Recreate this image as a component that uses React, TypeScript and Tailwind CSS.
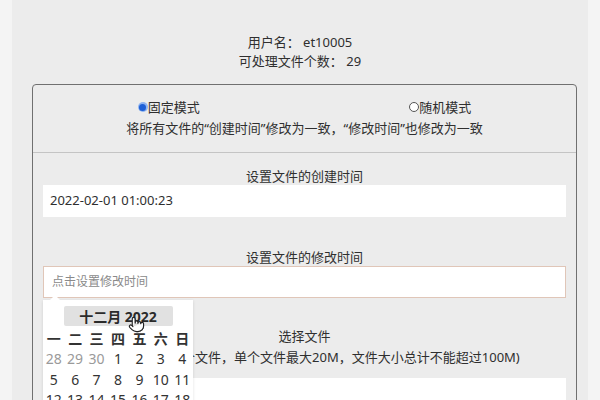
import * as React from "react";
import { Pointer } from "lucide-react";

const weekDays = ["一", "二", "三", "四", "五", "六", "日"];

const dayRows = [
  [
    { d: 28, muted: true },
    { d: 29, muted: true },
    { d: 30, muted: true },
    { d: 1 },
    { d: 2 },
    { d: 3 },
    { d: 4 },
  ],
  [{ d: 5 }, { d: 6 }, { d: 7 }, { d: 8 }, { d: 9 }, { d: 10 }, { d: 11 }],
  [{ d: 12 }, { d: 13 }, { d: 14 }, { d: 15 }, { d: 16 }, { d: 17 }, { d: 18 }],
];

function Radio({ checked, label }: { checked?: boolean; label: string }) {
  return (
    <label className="flex items-center justify-center leading-[20px]">
      {checked ? (
        <span className="flex h-[10px] w-[10px] items-center justify-center rounded-full bg-[#8fb4f0]">
          <span className="h-[7px] w-[7px] rounded-full bg-[#1d5fd6]" />
        </span>
      ) : (
        <span className="h-[10px] w-[10px] rounded-full border border-[#555] bg-white" />
      )}
      <span>{label}</span>
    </label>
  );
}

function DatePopup() {
  return (
    <div className="absolute left-0 top-[2px] w-[150px] bg-white pb-2 shadow-[0_1px_3px_rgba(0,0,0,0.12)]">
      {/* little arrow pointing up to the input */}
      <div className="absolute -top-[5px] left-[7px] h-0 w-0 border-x-[5px] border-b-[5px] border-x-transparent border-b-white" />
      <div className="flex justify-center pt-[6px]">
        <div className="flex h-[20px] w-[109px] items-center justify-center rounded-[2px] bg-[#e1e1e1] text-[14px] font-bold text-[#2b2b2b]">
          十二月 2022
        </div>
      </div>
      <div className="mt-[3px] grid grid-cols-7 text-center text-[14px] font-semibold leading-[20px] text-[#333]">
        {weekDays.map((w) => (
          <span key={w}>{w}</span>
        ))}
      </div>
      {dayRows.map((row, i) => (
        <div
          key={i}
          className="grid grid-cols-7 text-center text-[14px] leading-[20.5px]"
        >
          {row.map((c) => (
            <span
              key={c.d}
              className={c.muted ? "text-[#9a9a9a]" : "text-[#333]"}
            >
              {c.d}
            </span>
          ))}
        </div>
      ))}
      <Pointer
        className="absolute left-[85px] top-[16px] h-[17px] w-[17px]"
        fill="white"
        stroke="#222"
        strokeWidth={1.6}
      />
    </div>
  );
}

export default function App() {
  return (
    <div
      className="h-[400px] w-full overflow-hidden bg-[#f4f4f4] text-[13px] text-[#2f2f2f]"
      style={{ fontFamily: '"Noto Sans", "Noto Sans CJK SC", sans-serif' }}
    >
      <div className="ml-[12px] h-full w-[576px] bg-[#ececec]">
        <div className="pt-[33px] text-center leading-[19px]">
          <p>用户名： et10005</p>
          <p>可处理文件个数： 29</p>
        </div>

        <div className="ml-[20px] mt-[13px] w-[545px] rounded-[4px] border border-[#707070]">
          <div className="border-b border-[#c4c4c4] pb-[14px] pt-[12px]">
            <div className="grid grid-cols-2">
              <Radio checked label="固定模式" />
              <Radio label="随机模式" />
            </div>
            <p className="mt-[1px] text-center leading-[20px]">
              将所有文件的“创建时间”修改为一致，“修改时间”也修改为一致
            </p>
          </div>

          <div className="px-[10px] pt-[14px]">
            <p className="text-center leading-[18px]">设置文件的创建时间</p>
            <div className="flex h-[32px] items-center bg-white px-[7px]">
              2022-02-01 01:00:23
            </div>

            <p className="mt-[31px] text-center leading-[18px]">
              设置文件的修改时间
            </p>
            <div className="flex h-[32px] items-center border border-[#e0c6b8] bg-white px-[8px] text-[12px] text-[#8a8a8a]">
              点击设置修改时间
            </div>

            <div className="relative">
              <DatePopup />
              <p className="pt-[28px] text-center leading-[21px]">选择文件</p>
              <p className="text-center leading-[21px]">
                （最多可选择29个文件，单个文件最大20M，文件大小总计不能超过100M)
              </p>
              <div className="mt-[10px] h-[80px] bg-white" />
            </div>
          </div>
        </div>
      </div>
    </div>
  );
}
